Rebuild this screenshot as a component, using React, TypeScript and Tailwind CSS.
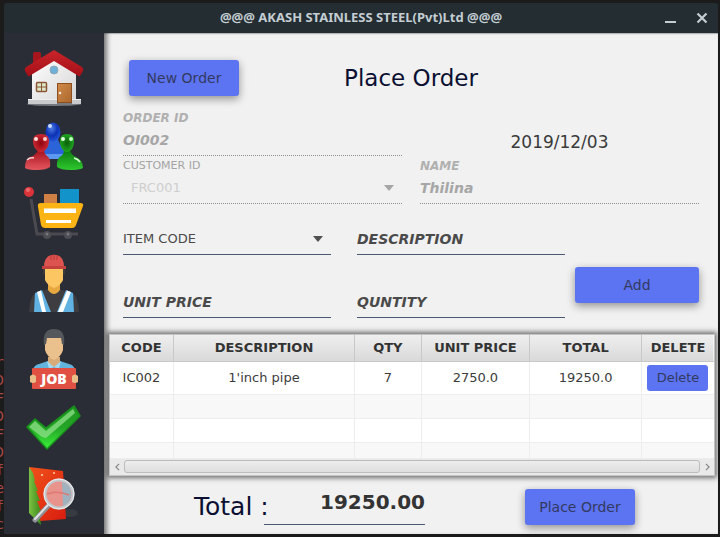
import React, { useState } from "react";

function HouseIcon() {
  return (
    <svg viewBox="0 0 60 70" className="h-full w-full" aria-hidden="true">
      <defs>
        <linearGradient id="roof" x1="0" y1="0" x2="0" y2="1">
          <stop offset="0" stopColor="#c9252b" />
          <stop offset="1" stopColor="#a50f17" />
        </linearGradient>
        <linearGradient id="wall" x1="0" y1="0" x2="1" y2="1">
          <stop offset="0" stopColor="#ffffff" />
          <stop offset="1" stopColor="#d5d5d7" />
        </linearGradient>
        <linearGradient id="door" x1="0" y1="0" x2="1" y2="1">
          <stop offset="0" stopColor="#d08a4a" />
          <stop offset="1" stopColor="#ab672d" />
        </linearGradient>
      </defs>
      <ellipse cx="30" cy="61" rx="27" ry="2" fill="#777b80" />
      <path d="M9 22V11q0-2 2-2h4q2 0 2 2v8z" fill="#a8161d" />
      <path d="M8 29 30 14 52 29V58H8z" fill="url(#wall)" />
      <path d="M4 56H33V61H4zM48 56H57V61H48z" fill="#c9cacc" />
      <path d="M4 56H33V57H4zM48 56H57V57H48z" fill="#ededee" />
      <path d="M30 7 58 24q2 2 1 4l-3 5q-1 1-3-1L30 18 7 32q-2 2-3 1l-3-5q-1-2 1-4z" fill="url(#roof)" />
      <circle cx="30" cy="27" r="4" fill="#6fb1d8" stroke="#8fa6b6" strokeWidth="1" />
      <rect x="12.500" y="39.500" width="10" height="9" rx="1" fill="#dbe7c8" stroke="#8a5633" strokeWidth="1.500" />
      <path d="M17.500 40v8M13 44h9" stroke="#8a5633" strokeWidth="1" />
      <rect x="33.500" y="40.500" width="14" height="19" fill="url(#door)" stroke="#8d4f20" />
      <circle cx="36" cy="50" r="1.300" fill="#f3e9d8" />
    </svg>
  );
}

function PeopleIcon() {
  return (
    <svg viewBox="0 0 60 70" className="h-full w-full" aria-hidden="true">
      <defs>
        <radialGradient id="blueHead" cx="0.4" cy="0.3" r="0.8">
          <stop offset="0" stopColor="#4f7ee6" />
          <stop offset="0.5" stopColor="#0d32b4" />
          <stop offset="1" stopColor="#2a5fe0" />
        </radialGradient>
        <radialGradient id="redHead" cx="0.5" cy="0.5" r="0.6">
          <stop offset="0" stopColor="#8e0510" />
          <stop offset="1" stopColor="#d9313a" />
        </radialGradient>
        <radialGradient id="greenHead" cx="0.5" cy="0.5" r="0.6">
          <stop offset="0" stopColor="#0b5f0b" />
          <stop offset="1" stopColor="#24b324" />
        </radialGradient>
        <linearGradient id="redBody" x1="0" y1="0" x2="0" y2="1">
          <stop offset="0" stopColor="#a30d18" />
          <stop offset="1" stopColor="#e5585f" />
        </linearGradient>
        <linearGradient id="greenBody" x1="0" y1="0" x2="0" y2="1">
          <stop offset="0" stopColor="#0b7a0e" />
          <stop offset="1" stopColor="#2fc92f" />
        </linearGradient>
      </defs>
      <path d="M24 26h10q1 5 5 8 3 3 2 12H18q-1-8 2-12 4-3 4-8z" fill="#2b63d8" />
      <path d="M20 41h19v5H20z" fill="#5c97f2" />
      <ellipse cx="29" cy="19" rx="7.500" ry="9.500" fill="url(#blueHead)" />
      <circle cx="26" cy="13" r="2" fill="#c9dcff" />
      <path d="M14 36h6q0 5 3 7 4 2 3 11-4 3-13 3-9 0-12-2 0-9 5-11 7-2 8-8z" fill="url(#redBody)" />
      <path d="M9 28q0-7 8-7t8 7-5 10q-3 2-6 0-5-3-5-10z" fill="url(#redHead)" />
      <circle cx="12" cy="26" r="2" fill="#ffe0de" />
      <circle cx="21" cy="26" r="2" fill="#ffd1d0" />
      <path d="M3 47q3-3 7-2" stroke="#fff" strokeWidth="1.500" fill="none" opacity=".8" />
      <path d="M40 37h6q1 5 6 7 7 3 7 11-4 2-13 2-9 0-13-3-1-8 4-11 3-2 3-6z" fill="url(#greenBody)" />
      <path d="M36 28q0-7 7-7t7 7-4 10q-3 2-6 0-4-3-4-10z" fill="url(#greenHead)" />
      <circle cx="39" cy="26" r="2" fill="#e1ffe0" />
      <circle cx="47" cy="26" r="2" fill="#c4ffc2" />
      <path d="M50 45q4 1 6 4" stroke="#d8ffd8" strokeWidth="1.500" fill="none" />
    </svg>
  );
}

function CartIcon() {
  return (
    <svg viewBox="0 0 60 70" className="h-full w-full" aria-hidden="true">
      <path d="M20 11h13v10H20z" fill="#d07f45" />
      <path d="M36 6h19v15H36z" fill="#1293c9" />
      <path d="M7 16 13 51H54" fill="none" stroke="#4b4a50" strokeWidth="3" />
      <circle cx="5" cy="9" r="5" fill="#d9343a" />
      <circle cx="4" cy="7" r="2" fill="#ec6a6a" />
      <path d="M17 20H56q4 0 3 3L52 42q-1 3-4 3H21q-3 0-4-3L14 24q-1-4 3-4z" fill="#fbb414" />
      <path d="M20 25.500H52V30H20zM22 37H47V40H22z" fill="#fff" />
      <circle cx="23" cy="52" r="4" fill="#4d4e54" />
      <circle cx="44" cy="52" r="4" fill="#4d4e54" />
      <circle cx="23" cy="51" r="1.500" fill="#77787d" />
      <circle cx="44" cy="51" r="1.500" fill="#77787d" />
    </svg>
  );
}

function WorkerIcon() {
  return (
    <svg viewBox="0 0 60 70" className="h-full w-full" aria-hidden="true">
      <path d="M5 59q1-14 5-18l14-5h11l15 5q4 4 5 18z" fill="#3e3d41" />
      <path d="M11 40 18 37 27 59H10zM49 40 42 37 33 59H50z" fill="#5fb2e2" />
      <path d="M13 39 17 37.500 22 59H18zM47 39 43 37.500 34 59H39z" fill="#fff" />
      <path d="M24 31h12v6q-6 8-12 0z" fill="#e8a83f" />
      <path d="M19 15h22v6l-2 1H21l-2-1z" fill="#3e3a38" />
      <path d="M21 15h18v12q-2 5-9 8-7-3-9-8z" fill="#fcc663" />
      <path d="M20 14q0-10 7-12h6q7 2 7 12z" fill="#dd5350" />
      <path d="M18 13h24v3H18z" fill="#c6423f" />
      <path d="M27 2v5M30 1v6M33 2v5" stroke="#b93835" strokeWidth="1" />
    </svg>
  );
}

function JobIcon() {
  return (
    <svg viewBox="0 0 60 70" className="h-full w-full" aria-hidden="true">
      <path d="M9 47q1-5 6-6l9-3h12l9 3q5 1 6 6z" fill="#62b4dc" />
      <path d="M24 34h12v6l-6 4-6-4z" fill="#d9ab78" />
      <path d="M23 38 30 44 25 46zM37 38 30 44 35 46z" fill="#a3d9f2" />
      <path d="M21 15h18v12q-2 7-9 10-7-3-9-10z" fill="#eac18d" />
      <path d="M20 22q-2-16 10-16t10 16l-2-1-1-6H23l-1 6z" fill="#54575b" />
      <rect x="8" y="45" width="44" height="21" rx="1" fill="#e05143" />
      <path d="M6 53q3-3 6 0v6q-3 2-6 0zM48 53q3-3 6 0v6q-3 2-6 0z" fill="#e8bd87" />
      <text x="30" y="61" textAnchor="middle" fontFamily="Open Sans, sans-serif" fontWeight="800" fontSize="14" fill="#fff">
        JOB
      </text>
    </svg>
  );
}

function CheckIcon() {
  return (
    <svg viewBox="0 0 60 70" className="h-full w-full" aria-hidden="true">
      <defs>
        <linearGradient id="check" x1="0" y1="0" x2="0" y2="1">
          <stop offset="0" stopColor="#1f9420" />
          <stop offset="0.5" stopColor="#25a527" />
          <stop offset="1" stopColor="#3cf03c" />
        </linearGradient>
      </defs>
      <path d="M3 34 11 26 22 35 50 13 56 23 23 56z" fill="url(#check)" stroke="#16901a" strokeWidth="1.500" strokeLinejoin="round" />
      <path d="M5 34 11 28 22 38 49 16 51 20 22 45 18 44z" fill="#8fe08a" opacity=".75" />
    </svg>
  );
}

function ReportIcon() {
  return (
    <svg viewBox="0 0 60 70" className="h-full w-full" aria-hidden="true">
      <defs>
        <linearGradient id="book" x1="0" y1="0" x2="1" y2="1">
          <stop offset="0" stopColor="#f0531a" />
          <stop offset="1" stopColor="#d81c10" />
        </linearGradient>
        <linearGradient id="tree" x1="0" y1="0" x2="1" y2="0">
          <stop offset="0" stopColor="#7cc142" />
          <stop offset="1" stopColor="#3c8a1c" />
        </linearGradient>
      </defs>
      <ellipse cx="46" cy="50" rx="8" ry="4" fill="#373a40" />
      <path d="M5 4 39 8 42 56 16 58z" fill="url(#book)" />
      <path d="M5 4 9 10 11 18 10 18 14 28 12 28 16 38 13 38 17 48 15 48 17 62 5 50z" fill="url(#tree)" />
      <path d="M25 42 11 57" stroke="#8d9196" strokeWidth="5" strokeLinecap="round" />
      <path d="M24 42 11 56" stroke="#dfe2e5" strokeWidth="2" strokeLinecap="round" />
      <circle cx="35" cy="31" r="14" fill="#e8a09c" fillOpacity=".88" stroke="#c3c8cd" strokeWidth="3" />
      <path d="M38 19q10 3 9 13-1 8-8 11z" fill="#9eb2bf" />
      <path d="M23 31q10-4 22 1" stroke="#dc7a73" strokeWidth="1.500" fill="none" />
      <circle cx="35" cy="31" r="15" fill="none" stroke="#eef0f2" strokeWidth="1" />
      <circle cx="18" cy="12" r="1" fill="#ffd9b0" />
      <circle cx="30" cy="10" r="1" fill="#ffc9a0" />
    </svg>
  );
}

const navigation = [
  { name: "Home", Icon: HouseIcon },
  { name: "Customers", Icon: PeopleIcon },
  { name: "Orders", Icon: CartIcon },
  { name: "Workers", Icon: WorkerIcon },
  { name: "Jobs", Icon: JobIcon },
  { name: "Confirm", Icon: CheckIcon },
  { name: "Reports", Icon: ReportIcon },
];

const columns = ["CODE", "DESCRIPTION", "QTY", "UNIT PRICE", "TOTAL", "DELETE"];
const order = ["IC002", "1'inch pipe", "7", "2750.0", "19250.0"];
const emptyRows = ["h-6 bg-[#f8f8f8]", "h-6 bg-white", "h-4 bg-[#f8f8f8]"];
const terminalLines = ["r", "D", "F", "D", "F", "D", "f", "e", "f", "c"];

function ActionButton({ children, className = "" }: { children: React.ReactNode; className?: string }) {
  return (
    <button
      type="button"
      className={`h-9 rounded-[3px] bg-[#5c73f2] text-sm text-[#333a5e] shadow-[0_3px_8px_rgba(0,0,0,0.4)] ${className}`}
    >
      {children}
    </button>
  );
}

function DisabledField({ id, label, value }: { id: string; label: string; value: string }) {
  return (
    <div className="flex flex-col border-b border-dotted border-[#909094] font-bold italic">
      <label htmlFor={id} className="h-5 text-xs leading-5 text-[#b0b0b0]">
        {label}
      </label>
      <input id={id} disabled value={value} readOnly className="h-[27px] w-full bg-transparent pb-1 text-sm text-[#a6a6a6]" />
    </div>
  );
}

function EntryField({ label }: { label: string }) {
  return (
    <input
      aria-label={label}
      placeholder={label}
      className="h-[31px] w-full border-b border-[#4a5875] bg-transparent text-sm font-bold italic text-[#4a4a4a] outline-none placeholder:text-[#4a4a4a]"
    />
  );
}

function Caret({ className }: { className: string }) {
  return (
    <svg viewBox="0 0 10 6" className={`pointer-events-none h-[6px] w-[10px] self-center justify-self-end [grid-area:1/1] ${className}`} aria-hidden="true">
      <path d="M0 0h10L5 6z" fill="currentColor" />
    </svg>
  );
}

export default function App() {
  const [total, setTotal] = useState("19250.00");

  return (
    <div className="flex min-h-screen bg-[#1b1b1c] font-['DejaVu_Sans',sans-serif]">
      <div className="flex w-1 shrink-0 flex-col justify-end overflow-hidden pb-1 font-['DejaVu_Sans_Mono',monospace] text-sm leading-[18px] text-[#a84848]" aria-hidden="true">
        {terminalLines.map((line, index) => (
          <span key={index} className="flex justify-end">{line}</span>
        ))}
      </div>

      <div className="mt-[3px] mr-[2px] mb-[3px] flex min-w-0 flex-1 flex-col">
        <header className="grid h-[30px] grid-cols-[1fr_auto_1fr] items-center rounded-t-[3px] bg-[#232d32] text-[#c3cdd2]">
          <h1 className="col-start-2 font-['Noto_Sans',sans-serif] text-[13px] font-bold">@@@ AKASH STAINLESS STEEL(Pvt)Ltd @@@</h1>
          <div className="flex justify-end gap-5 pr-[10px]">
            <button type="button" aria-label="Minimize">
              <svg viewBox="0 0 11 12" className="h-3 w-[11px]"><path d="M0 10h11" stroke="currentColor" strokeWidth="2" /></svg>
            </button>
            <button type="button" aria-label="Close">
              <svg viewBox="0 0 12 12" className="h-3 w-3"><path d="M1.500 1.500l9 9M10.500 1.500l-9 9" stroke="currentColor" strokeWidth="2.200" /></svg>
            </button>
          </div>
        </header>

        <div className="flex flex-1">
          <nav className="flex w-[100px] shrink-0 flex-col items-center bg-[#2a2d35] pt-[10px]" aria-label="Main">
            {navigation.map(({ name, Icon }) => (
              <button key={name} type="button" aria-label={name} className="h-[70px] w-[60px]">
                <Icon />
              </button>
            ))}
          </nav>

          <main className="flex min-w-0 flex-1 flex-col bg-[#f1f1f1] shadow-[inset_6px_0_5px_-3px_rgba(0,0,0,0.5),inset_0_1px_1px_rgba(0,0,0,0.25)]">
            <div className="px-[19px] pt-[27px]">
              <div className="grid grid-cols-[1fr_auto_1fr] items-center">
                <div className="pl-[6px]"><ActionButton className="w-[110px]">New Order</ActionButton></div>
                <h2 className="text-[23px] leading-9 text-[#0b1033]">Place Order</h2>
              </div>

              <div className="mt-3 grid grid-cols-2 gap-x-[18px]">
                <DisabledField id="order-id" label="ORDER ID" value="OI002" />
                <time className="self-end text-center text-[17px] leading-7 text-[#3a3a3a]">2019/12/03</time>
                <div className="flex flex-col border-b border-dotted border-[#909094]">
                  <label htmlFor="customer-id" className="h-5 text-[11px] leading-5 text-[#a4a4a4]">CUSTOMER ID</label>
                  <div className="grid">
                    <select id="customer-id" disabled className="h-[27px] w-full appearance-none bg-transparent pb-1 pl-2 text-[13px] text-[#cecece] opacity-100 [grid-area:1/1]">
                      <option>FRC001</option>
                    </select>
                    <Caret className="mr-2 mb-1 text-[#a6a6a6]" />
                  </div>
                </div>
                <DisabledField id="name" label="NAME" value="Thilina" />
              </div>

              <div className="mt-5 flex items-center gap-[10px]">
                <div className="grid flex-1 grid-cols-2 gap-x-[26px] gap-y-8">
                  <div className="grid border-b border-[#4a5875]">
                    <select aria-label="Item code" className="h-[30px] w-full appearance-none bg-transparent text-[13px] text-[#4a4a4a] outline-none [grid-area:1/1]">
                      <option>ITEM CODE</option>
                    </select>
                    <Caret className="mr-2 text-[#505050]" />
                  </div>
                  <EntryField label="DESCRIPTION" />
                  <EntryField label="UNIT PRICE" />
                  <EntryField label="QUNTITY" />
                </div>
                <ActionButton className="mt-7 w-[124px]">Add</ActionButton>
              </div>
            </div>

            <section className="mt-4 mr-[3px] ml-[5px] border border-[#c4c4c4] bg-white shadow-[0_0_5px_2px_rgba(0,0,0,0.55)]" aria-label="Order items">
              <table className="w-full table-fixed border-collapse text-[13px] text-[#3c3c3c]">
                <colgroup>
                  <col className="w-[10.5%]" />
                  <col className="w-[30%]" />
                  <col className="w-[11%]" />
                  <col className="w-[18%]" />
                  <col className="w-[18.5%]" />
                  <col className="w-[12%]" />
                </colgroup>
                <thead>
                  <tr className="h-[26px] bg-linear-to-b from-[#efefef] to-[#d9d9d9] text-[#333333]">
                    {columns.map((column) => (
                      <th key={column} scope="col" className="border-r border-b border-[#c8c8c8] p-0 font-bold last:border-r-0">{column}</th>
                    ))}
                  </tr>
                </thead>
                <tbody>
                  <tr className="h-[33px]">
                    {order.map((cell) => (
                      <td key={cell} className="border-r border-b border-[#ededed] p-0 text-center">{cell}</td>
                    ))}
                    <td className="border-b border-[#ededed] p-0 text-center">
                      <button type="button" className="h-[26px] w-[61px] rounded-[3px] bg-[#5c73f2] align-middle text-[#333a5e]">Delete</button>
                    </td>
                  </tr>
                  {emptyRows.map((row, index) => (
                    <tr key={index} className={row}>
                      {columns.map((column) => (
                        <td key={column} className="border-r border-b border-[#ededed] p-0 last:border-r-0" />
                      ))}
                    </tr>
                  ))}
                </tbody>
              </table>
              <div className="flex h-4 items-center bg-[#e9e9e9] text-[#888888]">
                <button type="button" aria-label="Scroll left" className="flex w-[14px] justify-center">
                  <svg viewBox="0 0 6 10" className="h-2 w-[5px]"><path d="M5 1L1 5l4 4" fill="none" stroke="currentColor" strokeWidth="1.500" /></svg>
                </button>
                <div className="h-[13px] flex-1 rounded-[3px] border border-[#bcbcbc] bg-linear-to-b from-[#ededed] to-[#dedede]" />
                <button type="button" aria-label="Scroll right" className="flex w-[14px] justify-center">
                  <svg viewBox="0 0 6 10" className="h-2 w-[5px]"><path d="M1 1l4 4-4 4" fill="none" stroke="currentColor" strokeWidth="1.500" /></svg>
                </button>
              </div>
            </section>

            <footer className="mt-[13px] flex items-center pr-[83px] pl-[90px]">
              <label htmlFor="total" className="w-[70px] text-[25px] leading-9 whitespace-nowrap text-[#0b1033]">Total :</label>
              <input
                id="total"
                value={total}
                onChange={(event) => setTotal(event.target.value)}
                className="h-9 w-[161px] border-b border-[#4a5875] bg-transparent pb-2 text-right text-xl font-bold text-[#333333] outline-none"
              />
              <ActionButton className="ml-auto w-[110px]">Place Order</ActionButton>
            </footer>
          </main>
        </div>
      </div>
    </div>
  );
}
